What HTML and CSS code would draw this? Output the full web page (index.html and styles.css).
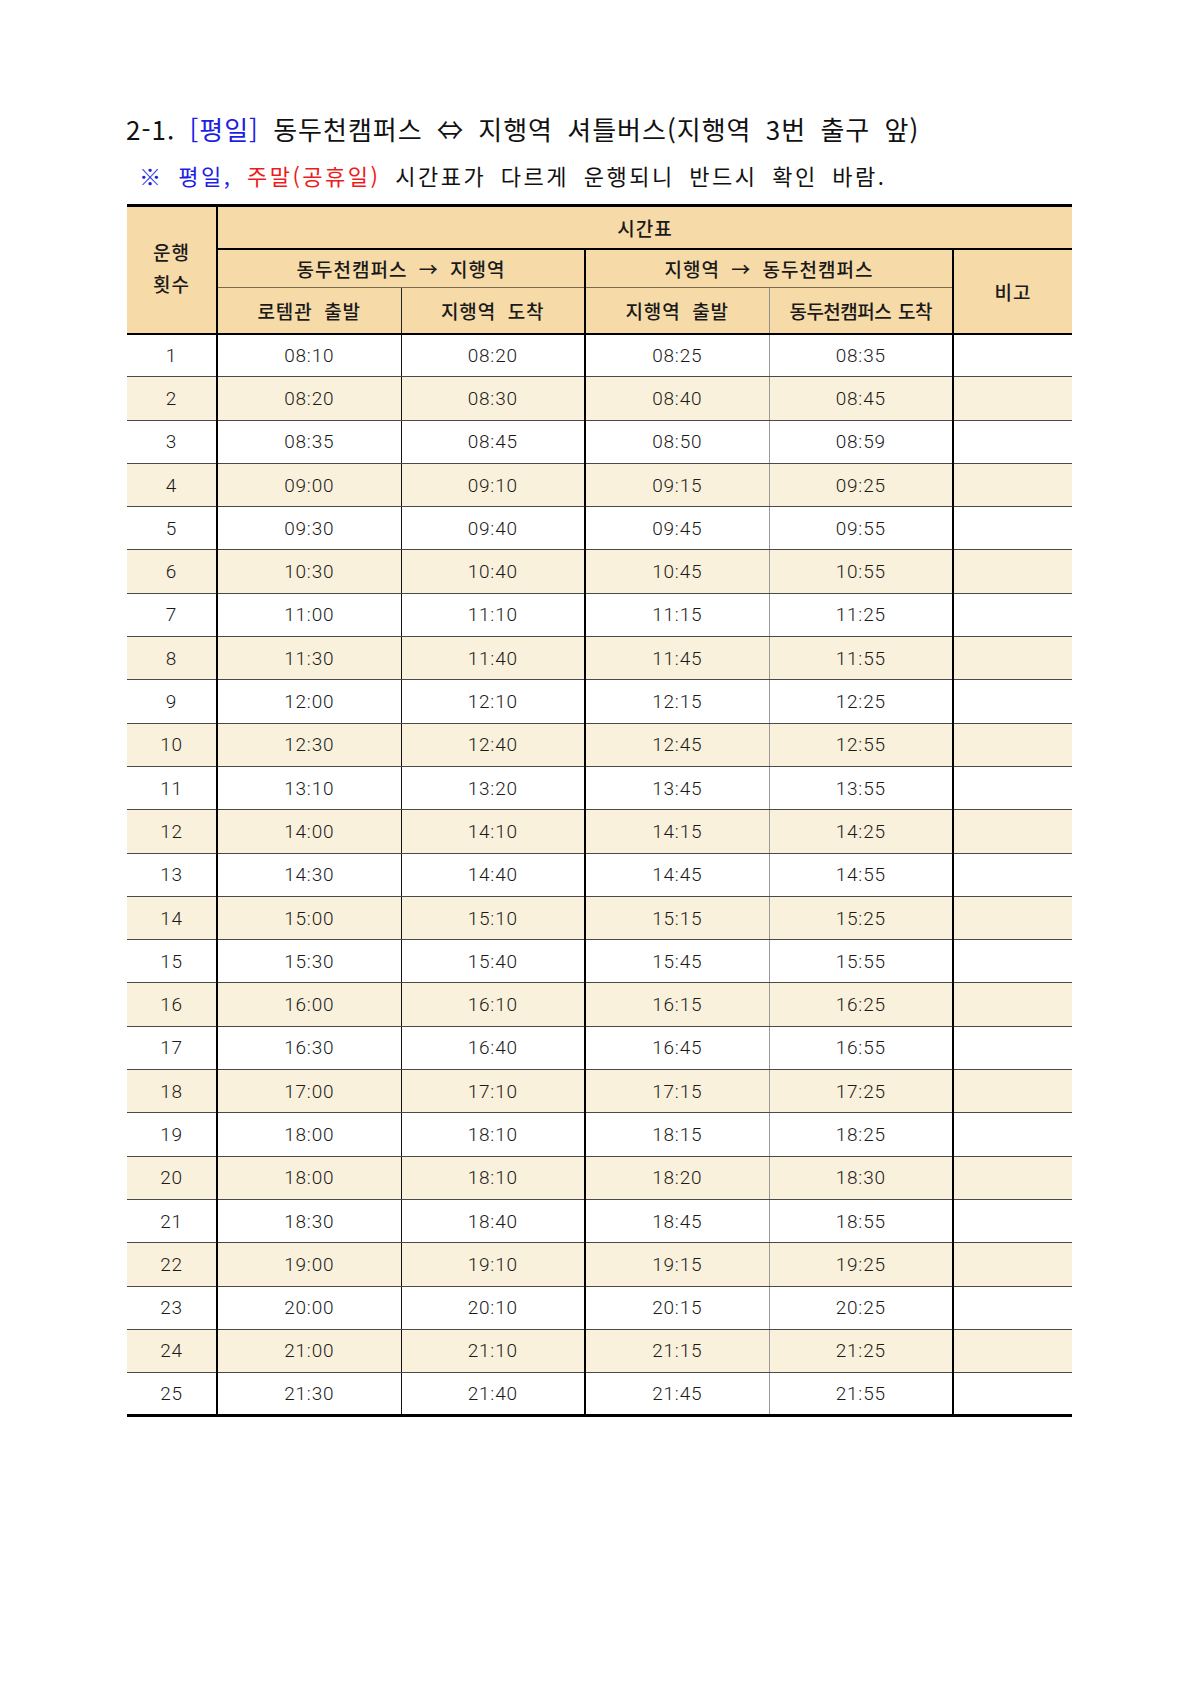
FILE: index.html
```html
<!DOCTYPE html>
<html lang="ko">
<head>
<meta charset="utf-8">
<title>셔틀버스 시간표</title>
<link rel="stylesheet" href="styles.css">
</head>
<body>
<div class="page">
  <h1 class="title">2-1. <span class="blue">[평일]</span> 동두천캠퍼스 ⇔ 지행역 셔틀버스(지행역 3번 출구 앞)</h1>
  <p class="note"><span class="blue">※ 평일,</span> <span class="red">주말(공휴일)</span> 시간표가 다르게 운행되니 반드시 확인 바람.</p>
  <table class="tt">
    <colgroup>
      <col class="c-no"><col class="c-t"><col class="c-t"><col class="c-t"><col class="c-t"><col class="c-memo">
    </colgroup>
    <thead>
      <tr class="h1">
        <th rowspan="3" class="h-no">운행<br>횟수</th>
        <th colspan="5" class="h-main">시간표</th>
      </tr>
      <tr class="h2">
        <th colspan="2" class="g1">동두천캠퍼스 → 지행역</th>
        <th colspan="2" class="g2">지행역 → 동두천캠퍼스</th>
        <th rowspan="2" class="h-memo">비고</th>
      </tr>
      <tr class="h3">
        <th class="s1">로템관 출발</th>
        <th class="s2">지행역 도착</th>
        <th class="s3">지행역 출발</th>
        <th class="s4 tight">동두천캠퍼스 도착</th>
      </tr>
    </thead>
    <tbody>
      <tr><td>1</td><td>08:10</td><td>08:20</td><td>08:25</td><td>08:35</td><td></td></tr>
      <tr><td>2</td><td>08:20</td><td>08:30</td><td>08:40</td><td>08:45</td><td></td></tr>
      <tr><td>3</td><td>08:35</td><td>08:45</td><td>08:50</td><td>08:59</td><td></td></tr>
      <tr><td>4</td><td>09:00</td><td>09:10</td><td>09:15</td><td>09:25</td><td></td></tr>
      <tr><td>5</td><td>09:30</td><td>09:40</td><td>09:45</td><td>09:55</td><td></td></tr>
      <tr><td>6</td><td>10:30</td><td>10:40</td><td>10:45</td><td>10:55</td><td></td></tr>
      <tr><td>7</td><td>11:00</td><td>11:10</td><td>11:15</td><td>11:25</td><td></td></tr>
      <tr><td>8</td><td>11:30</td><td>11:40</td><td>11:45</td><td>11:55</td><td></td></tr>
      <tr><td>9</td><td>12:00</td><td>12:10</td><td>12:15</td><td>12:25</td><td></td></tr>
      <tr><td>10</td><td>12:30</td><td>12:40</td><td>12:45</td><td>12:55</td><td></td></tr>
      <tr><td>11</td><td>13:10</td><td>13:20</td><td>13:45</td><td>13:55</td><td></td></tr>
      <tr><td>12</td><td>14:00</td><td>14:10</td><td>14:15</td><td>14:25</td><td></td></tr>
      <tr><td>13</td><td>14:30</td><td>14:40</td><td>14:45</td><td>14:55</td><td></td></tr>
      <tr><td>14</td><td>15:00</td><td>15:10</td><td>15:15</td><td>15:25</td><td></td></tr>
      <tr><td>15</td><td>15:30</td><td>15:40</td><td>15:45</td><td>15:55</td><td></td></tr>
      <tr><td>16</td><td>16:00</td><td>16:10</td><td>16:15</td><td>16:25</td><td></td></tr>
      <tr><td>17</td><td>16:30</td><td>16:40</td><td>16:45</td><td>16:55</td><td></td></tr>
      <tr><td>18</td><td>17:00</td><td>17:10</td><td>17:15</td><td>17:25</td><td></td></tr>
      <tr><td>19</td><td>18:00</td><td>18:10</td><td>18:15</td><td>18:25</td><td></td></tr>
      <tr><td>20</td><td>18:00</td><td>18:10</td><td>18:20</td><td>18:30</td><td></td></tr>
      <tr><td>21</td><td>18:30</td><td>18:40</td><td>18:45</td><td>18:55</td><td></td></tr>
      <tr><td>22</td><td>19:00</td><td>19:10</td><td>19:15</td><td>19:25</td><td></td></tr>
      <tr><td>23</td><td>20:00</td><td>20:10</td><td>20:15</td><td>20:25</td><td></td></tr>
      <tr><td>24</td><td>21:00</td><td>21:10</td><td>21:15</td><td>21:25</td><td></td></tr>
      <tr><td>25</td><td>21:30</td><td>21:40</td><td>21:45</td><td>21:55</td><td></td></tr>
    </tbody>
  </table>
</div>
</body>
</html>
```
FILE: styles.css
```css
html, body {
  margin: 0;
  padding: 0;
  background: #ffffff;
}

.page {
  padding: 110px 0 0 126px;
  font-family: "Noto Sans CJK KR", "Noto Sans", sans-serif;
  color: #111111;
}

.title {
  margin: 0;
  font-size: 26px;
  font-weight: 400;
  line-height: 38px;
  letter-spacing: 1px;
  word-spacing: 6px;
  white-space: nowrap;
}

.note {
  margin: 11px 0 13px 13px;
  font-size: 22px;
  font-weight: 400;
  line-height: 32px;
  letter-spacing: 2.5px;
  word-spacing: 6px;
  white-space: nowrap;
}

.blue { color: #1e1ee6; }
.red { color: #ec1c1c; }

.tt {
  margin-left: 1px;
  width: 945px;
  table-layout: fixed;
  border-collapse: collapse;
  border-top: 3px solid #000;
  border-bottom: 3px solid #000;
}

.c-no { width: 90px; }
.c-t { width: 184px; }
.c-memo { width: 119px; }

.tt th {
  background: #f6dba8;
  font-family: "Noto Sans CJK KR", sans-serif;
  font-size: 19px;
  font-weight: 500;
  color: #1a1a1a;
  letter-spacing: 1px;
  word-spacing: 5px;
  padding: 0;
  text-align: center;
  vertical-align: middle;
  white-space: nowrap;
}

.tt .h1 { height: 43px; }
.tt .h2 { height: 39px; }
.tt .h3 { height: 46px; }

.tt .h-no {
  border-right: 2px solid #000;
  border-bottom: 2px solid #000;
  line-height: 32px;
  padding-bottom: 4px;
}

.tt .h-main {
  border-bottom: 2px solid #000;
}

.tt .g1 {
  border-right: 2px solid #000;
  border-bottom: 1px solid #7c6a4e;
}

.tt .g2 {
  border-bottom: 1px solid #7c6a4e;
}

.tt .h-memo {
  border-left: 2px solid #000;
  border-bottom: 2px solid #000;
}

.tt .h3 th { border-bottom: 2px solid #000; }
.tt .s1 { border-right: 1px solid #222; }
.tt .s2 { border-right: 2px solid #000; }
.tt .s3 { border-right: 1px solid #8f8f8f; }
.tt .s4 { border-right: 2px solid #000; }
.tt .tight { letter-spacing: -0.5px; word-spacing: 2px; }

.tt tbody tr { height: 43.3px; }
.tt tbody tr:nth-child(even) td { background: #faf1dc; }

.tt td {
  padding: 0;
  text-align: center;
  vertical-align: middle;
  font-family: Roboto, "Liberation Sans", sans-serif;
  font-weight: 300;
  font-size: 19px;
  letter-spacing: 0.8px;
  color: #1a1a1a;
  border-bottom: 1px solid #4a4a4a;
}

.tt tbody tr:last-child td { border-bottom: 3px solid #000; }

.tt td:nth-child(1) { border-right: 2px solid #000; }
.tt td:nth-child(2) { border-right: 1px solid #111; }
.tt td:nth-child(3) { border-right: 2px solid #000; }
.tt td:nth-child(4) { border-right: 1px solid #9a9a9a; }
.tt td:nth-child(5) { border-right: 2px solid #000; }
```
